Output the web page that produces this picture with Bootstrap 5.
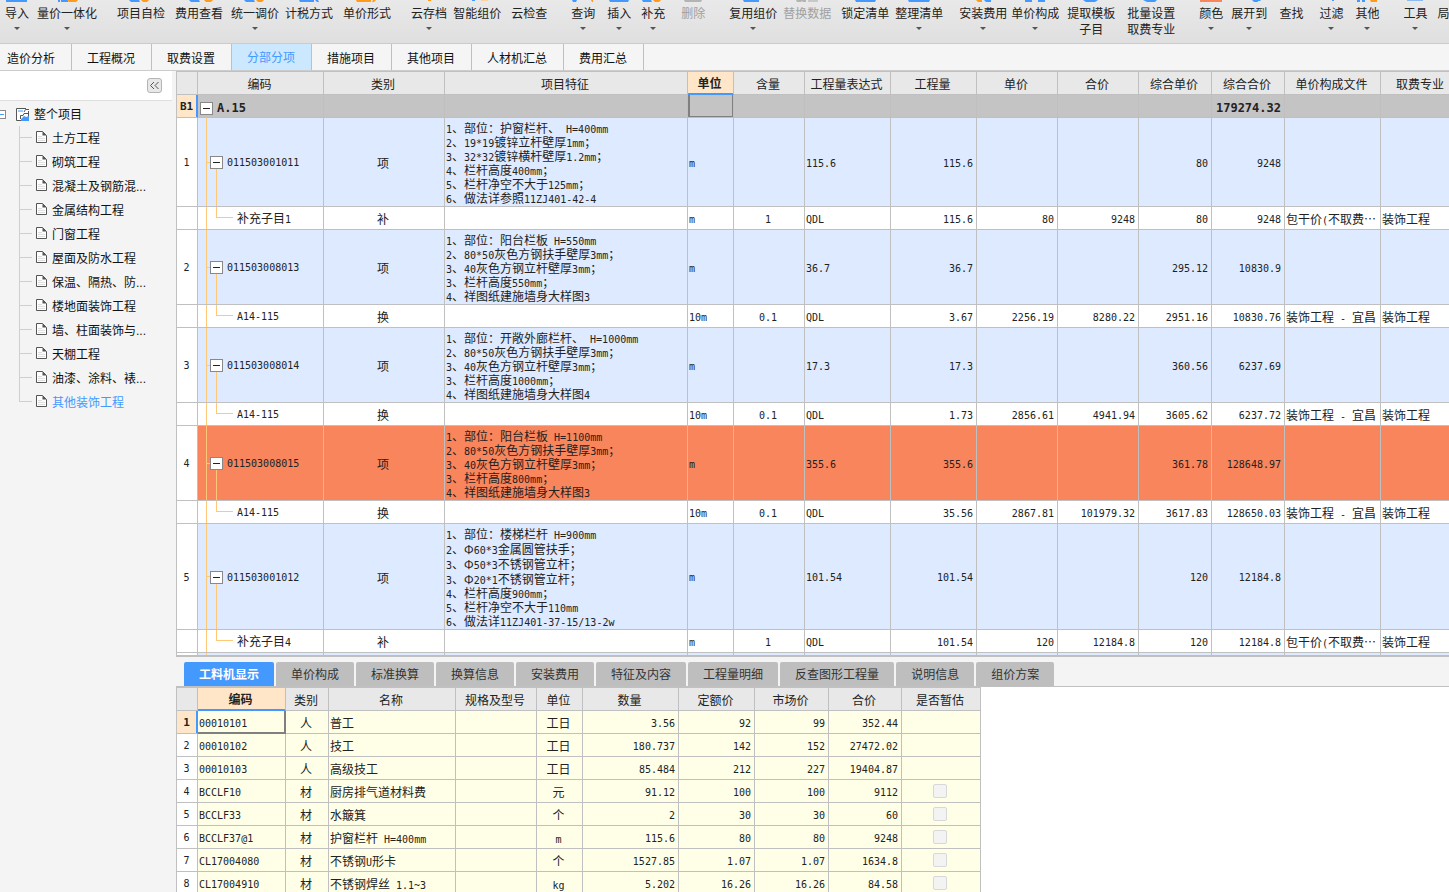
<!DOCTYPE html>
<html lang="zh-CN">
<head>
<meta charset="utf-8">
<meta name="viewport" content="width=device-width, initial-scale=1">
<title>分部分项</title>
<link href="https://cdn.jsdelivr.net/npm/bootstrap@5.3.0/dist/css/bootstrap.min.css" rel="stylesheet">
<script src="https://cdn.jsdelivr.net/npm/bootstrap@5.3.0/dist/js/bootstrap.bundle.min.js" defer></script>
<style>
:root { --line:#c0c0c0; --blue:#4499ff; --peach:#ffe6c8; --branch:#ffc878; --han:"Noto Sans CJK SC",sans-serif; --mono:"DejaVu Sans Mono","Noto Sans CJK SC",monospace; }
body { font:12px/16px "Liberation Sans","Noto Sans CJK SC",sans-serif; color:#111; background:#f4f4f4; }
button { font:inherit; color:inherit; border:0; background:none; padding:0; }
a { color:inherit; text-decoration:none; }

/* ribbon */
.ribbon { height:43px; padding-left:5px; background:linear-gradient(#e9e9e9,#dfdfdf); white-space:nowrap; color:#222; }
.ribbon button { flex:none; display:flex; flex-direction:column; align-items:center; }
.ribbon svg { width:24px; height:6px; margin:0 -6px; display:block; overflow:visible; }
.ribbon button.has-menu::after { content:""; margin-top:5px; border:3px solid transparent; border-top-color:#555; border-bottom:0; }
.ribbon button:disabled { color:#a0a0a0; }
.ms-6 { margin-left:6px; } .ms-10 { margin-left:10px; } .ms-12 { margin-left:12px; } .ms-20 { margin-left:20px; }
.b { fill:#4499ff; } .o { fill:#ff9a1a; } .g { fill:#b4b4b4; } .l { fill:#c8c8c8; } .r { fill:#f8855c; }

/* page tabs */
.pages { height:28px; border-top:1px solid #ccc; border-bottom:1px solid #ccc; background:#f5f5f5; }
.pages a { flex:none; padding:7px 16px 0 15px; border-right:1px solid var(--line); color:#111; }
.pages a:first-child { padding-left:7px; }
.pages a.active { background:#cce8ff; color:var(--blue); padding-top:6px; }

/* project tree */
.side { width:172px; flex:none; margin-right:4px; }
.side-head { height:30px; background:#fff; border-bottom:1px solid #e0e0e0; padding:0 10px; }
.fold { width:15px; height:15px; border:1px solid #b4b4b4; border-radius:3px; background:#e8e8e8; }
.tree-root { height:24px; gap:4px; margin-top:1px; padding-top:2px; }
.tree-root svg { margin-bottom:2px; }
.tree-root .stub { width:6px; height:9px; border:1px solid #8a8a8a; border-left:0; margin:0 6px 2px 0; background:linear-gradient(var(--blue),var(--blue)) 0 3px/4px 1px no-repeat #fff; }
.tree li { height:24px; padding-left:19px; background:linear-gradient(var(--branch),var(--branch)) 19px 0/1px 24px no-repeat, linear-gradient(var(--branch),var(--branch)) 19px 11px/13px 1px no-repeat; }
.tree li:last-child { background-size:1px 12px,13px 1px; }
.tree li a { gap:5px; padding:2px 0 0 17px; height:24px; color:#111; }
.tree li svg { margin-bottom:4px; }
.tree li a.active { color:var(--blue); }

/* grids */
.sheet { border-left:1px solid var(--line); }
.upper { border-top:1px solid var(--line); border-bottom:2px solid var(--line); background:#fff; }
.cells { table-layout:fixed; border-collapse:separate; border-spacing:0; font-family:var(--mono); font-size:10px; line-height:14px; color:#222; }
.cells th, .cells td { border-right:1px solid var(--line); border-bottom:1px solid var(--line); padding:3px 3px 0 1px; height:23px; white-space:nowrap; overflow:hidden; }
.cells thead th { background:#e8e8e8; font:12px/14px var(--han); text-align:center; padding-top:1px; }
.cells tbody th { background:#fff; font-weight:400; text-align:center; padding:2px 1px 0 0; }
.cells thead th.on { background:var(--peach); font-weight:700; border-bottom-color:var(--blue); box-shadow:inset 0 -1px var(--blue); padding-top:0; }
.cells tbody th.on { background:var(--peach); font-weight:700; border-right-color:var(--blue); box-shadow:inset -1px 0 var(--blue); font-size:11px; }
.han { font:12px/14px var(--han); }
.lt { font:10px/1 var(--mono); }

.bill { width:1285px; }
.bill td:nth-child(3), .bill td:nth-child(4), .bill td:nth-child(13), .bill td:nth-child(14) { font:12px/14px var(--han); padding-top:2px; }
.bill td:nth-child(3), .bill td:nth-child(6) { text-align:center; }
.bill td:nth-child(n+8):nth-child(-n+12) { text-align:right; }
.bill .item td { background-color:#deeaff; }
.bill .flag td { background-color:#f8855c; }
.bill .h89 td { height:89px; } .bill .h75 td { height:75px; } .bill .h106 td { height:106px; }
.bill .phi { line-height:15px; display:inline-block; }
.bill .total td { background:#c4c4c4; font-weight:700; font-size:12px; }
.bill .total td.pick { box-shadow:inset 2px 0 #808080, inset -1px 0 #808080, inset 0 -1px #808080; }
.bill .item td.code { padding:2px 0 0 12px; background-image:linear-gradient(var(--branch),var(--branch)),linear-gradient(var(--branch),var(--branch)),linear-gradient(var(--branch),var(--branch)); background-repeat:no-repeat; background-position:8px 0,8px 50%,18px 100%; background-size:1px 100%,5px 1px,1px 50%; }
.bill .sub td.code { padding-top:2px; padding-left:39px; background-image:linear-gradient(var(--branch),var(--branch)),linear-gradient(var(--branch),var(--branch)),linear-gradient(var(--branch),var(--branch)); background-repeat:no-repeat; background-position:8px 0,18px 0,18px 10px; background-size:1px 100%,1px 10px,17px 1px; }
.toggle { width:13px; height:13px; border:1px solid #888; background:linear-gradient(#222,#222) center/7px 1px no-repeat #fff; margin-right:4px; vertical-align:-2px; }
.total .toggle { margin-left:1px; }

.detail { height:235px; flex:none; }
.kinds { padding:5px 0 0 8px; gap:2px; height:30px; border-bottom:1px solid var(--line); flex:none; }
.kinds button { flex:none; height:24px; padding:1px 15px 0; background:#bebebe; border-radius:2px 2px 0 0; color:#333; }
.kinds button.active { background:var(--blue); color:#fff; font-weight:700; }
.resources { border-top:1px solid var(--line); }
.res { width:804px; }
.res td { background:#ffffe8; }
.res td:nth-child(3), .res td:nth-child(4), .res td:nth-child(6) { font:12px/14px var(--han); padding-top:1px; }
.res td:nth-child(3), .res td:nth-child(6), .res td:nth-child(11) { text-align:center; }
.res td:nth-child(n+7):nth-child(-n+10) { text-align:right; }
.res td:nth-child(11) { padding-top:0; }
.res td.pick { box-shadow:inset -1px -1px #808080; border-right-color:#808080; border-bottom-color:#808080; }
.res input { appearance:none; display:block; width:14px; height:14px; margin:0 auto; border:1px solid #d8d8d8; border-radius:2px; background:#f3f3f3; }
</style>
</head>
<body class="vh-100 overflow-hidden d-flex flex-column">

<header class="ribbon d-flex align-items-start overflow-hidden flex-shrink-0">
  <button class="has-menu"><svg viewBox="-12 0 24 6"><rect class="b" x="-11" width="21" height="2"/></svg>导入</button>
  <button class="has-menu ms-2"><svg viewBox="-12 0 24 6"><path class="b" d="M-9 0h2v2h-2zM-6 0h7v2h-7z"/><path class="o" d="M0 0h11l-2 2H2z"/></svg>量价一体化</button>
  <button class="ms-20"><svg viewBox="-12 0 24 6"><path class="b" d="M-12 0h10l1 2h-9z"/><path class="o" d="M0 0h8l-2 2H2z"/></svg>项目自检</button>
  <button class="ms-10"><svg viewBox="-12 0 24 6"><path class="b" d="M-10 0H0l1 2h-9z"/><path class="o" d="M5 0h9l-2 2H7z"/></svg>费用查看</button>
  <button class="has-menu ms-2"><svg viewBox="-12 0 24 6"><path class="b" d="M-11 0h10l1 2h-9z"/><path class="o" d="M1 0h8L7 2H3z"/></svg>统一调价</button>
  <button class="ms-6"><svg viewBox="-12 0 24 6"><path class="b" d="M-10 0H5v2H-9zM6 0h3l1 2H8z"/></svg>计税方式</button>
  <button class="ms-10"><svg viewBox="-12 0 24 6"><path class="o" d="M-11 0H4v2h-14zM6 0h3L7 2H5z"/></svg>单价形式</button>
  <button class="has-menu ms-20"><svg viewBox="-12 0 24 6"><rect class="o" x="-1" width="3" height="1"/></svg>云存档</button>
  <button class="ms-6"><svg viewBox="-12 0 24 6"><rect class="b" x="-5" width="3" height="1"/><rect x="4" width="7" height="1" fill="#ffd0a0"/></svg>智能组价</button>
  <button class="ms-10"><svg viewBox="-12 0 24 6"></svg>云检查</button>
  <button class="has-menu ms-4"><svg viewBox="-12 0 24 6"><path class="b" d="M-11 0h5l-1 2h-3z"/><path class="o" d="M8 0h2v2H9z"/></svg>查询</button>
  <button class="has-menu ms-12"><svg viewBox="-12 0 24 6"><path class="b" d="M-10 0h20L9 2H-9z"/></svg>插入</button>
  <button class="has-menu ms-10"><svg viewBox="-12 0 24 6"><path class="b" d="M-11 0h9l1 2h-9z"/><path class="o" d="M0 0h8L6 2H2z"/></svg>补充</button>
  <button class="ms-3" disabled><svg viewBox="-12 0 24 6"><path class="g" d="M-9 0H9L8 2H-8z"/></svg>删除</button>
  <button class="has-menu ms-4"><svg viewBox="-12 0 24 6"><path class="b" d="M-10 0H6v2H-9z"/></svg>复用组价</button>
  <button class="ms-6" disabled><svg viewBox="-12 0 24 6"><path class="g" d="M-11 0h10v2h-3l-1-1-1 1h-4z"/><path class="l" d="M1 0h10v2H1z"/></svg>替换数据</button>
  <button class="ms-10"><svg viewBox="-12 0 24 6"><path class="b" d="M-10 0h21l-1 2H-9z"/></svg>锁定清单</button>
  <button class="has-menu ms-6"><svg viewBox="-12 0 24 6"><path class="b" d="M-11 0h22l-1 2h-20z"/></svg>整理清单</button>
  <button class="has-menu ms-3"><svg viewBox="-12 0 24 6"><path class="o" d="M-7 0h6v2h-4z"/><path class="b" d="M1 0h7v2H3z"/></svg>安装费用</button>
  <button class="has-menu ms-1"><svg viewBox="-12 0 24 6"><path class="b" d="M-10 0h7v2h-7zM3 0h7v2H3z"/></svg>单价构成</button>
  <button class="ms-2"><svg viewBox="-12 0 24 6"><path class="b" d="M-8 0H7L4 2h-9z"/></svg>提取模板<br>子目</button>
  <button class="ms-12"><svg viewBox="-12 0 24 6"><path class="b" d="M-8 0H6L4 2h-8z"/></svg>批量设置<br>取费专业</button>
  <button class="has-menu ms-4"><svg viewBox="-12 0 24 6"><rect class="r" x="-11" width="22" height="2"/></svg>颜色</button>
  <button class="has-menu ms-2"><svg viewBox="-12 0 24 6"><path class="b" d="M3 0h9l-1 1H9v1H5z"/></svg>展开到</button>
  <button class="ms-12"><svg viewBox="-12 0 24 6"></svg>查找</button>
  <button class="has-menu ms-3"><svg viewBox="-12 0 24 6"><rect class="b" x="1" width="2" height="1"/></svg>过滤</button>
  <button class="has-menu ms-12"><svg viewBox="-12 0 24 6"><path class="b" d="M-10 0h3v2h-3zM-5 0h3v2h-3z"/><path class="o" d="M3 0h7v2H4z"/></svg>其他</button>
  <button class="has-menu ms-4"><svg viewBox="-12 0 24 6"><rect x="-8" width="16" height="1" fill="#8cb9f0"/></svg>工具</button>
  <button class="ms-10"><svg viewBox="-12 0 24 6"></svg>局</button>
</header>

<nav class="pages d-flex flex-shrink-0 overflow-hidden">
  <a href="#">造价分析</a><a href="#">工程概况</a><a href="#">取费设置</a><a href="#" class="active">分部分项</a><a href="#">措施项目</a><a href="#">其他项目</a><a href="#">人材机汇总</a><a href="#">费用汇总</a>
</nav>

<div class="d-flex flex-grow-1 overflow-hidden">
  <aside class="side">
    <div class="side-head d-flex align-items-center justify-content-end">
      <button class="fold d-flex align-items-center justify-content-center" aria-label="收起"><svg width="11" height="9" viewBox="0 0 11 9" fill="none" stroke="#555"><path d="M5 1L1.500 4.500 5 8M9.500 1L6 4.500 9.500 8"/></svg></button>
    </div>
    <div class="tree-root d-flex align-items-center">
      <span class="stub"></span>
      <svg width="14" height="13" viewBox="0 0 14 13"><path d="M.5.500h12v12H.5z" fill="#fff"/><path d="M10 .5H.5v12H5M12.500 3v9.500" stroke="#555" fill="none"/><path d="M2 2h5v2H2z" fill="#9cccff"/><path d="M13 1.500H9.500L8 4M4.500 11V7.500H7l1-2h4" fill="none" stroke="#555"/><path d="M5 12v-1l3-3 2 1 3-1v5H5z" fill="#4499ff"/></svg>
      <a href="#" class="text-nowrap">整个项目</a>
    </div>
    <svg width="0" height="0" class="position-absolute"><symbol id="doc" viewBox="0 0 11 12"><path d="M.5.5h6l4 4v7H.5z" fill="#fff" stroke="#555"/><path d="M6.500.5v4h4z" fill="#555"/><path d="M2 5.500h4M2 7.500h7M2 9.500h7" stroke="#ddd"/></symbol></svg>
    <ul class="tree list-unstyled m-0 text-nowrap">
      <li><a href="#" class="d-flex align-items-center"><svg width="11" height="12"><use href="#doc"/></svg>土方工程</a></li>
      <li><a href="#" class="d-flex align-items-center"><svg width="11" height="12"><use href="#doc"/></svg>砌筑工程</a></li>
      <li><a href="#" class="d-flex align-items-center"><svg width="11" height="12"><use href="#doc"/></svg>混凝土及钢筋混...</a></li>
      <li><a href="#" class="d-flex align-items-center"><svg width="11" height="12"><use href="#doc"/></svg>金属结构工程</a></li>
      <li><a href="#" class="d-flex align-items-center"><svg width="11" height="12"><use href="#doc"/></svg>门窗工程</a></li>
      <li><a href="#" class="d-flex align-items-center"><svg width="11" height="12"><use href="#doc"/></svg>屋面及防水工程</a></li>
      <li><a href="#" class="d-flex align-items-center"><svg width="11" height="12"><use href="#doc"/></svg>保温、隔热、防...</a></li>
      <li><a href="#" class="d-flex align-items-center"><svg width="11" height="12"><use href="#doc"/></svg>楼地面装饰工程</a></li>
      <li><a href="#" class="d-flex align-items-center"><svg width="11" height="12"><use href="#doc"/></svg>墙、柱面装饰与...</a></li>
      <li><a href="#" class="d-flex align-items-center"><svg width="11" height="12"><use href="#doc"/></svg>天棚工程</a></li>
      <li><a href="#" class="d-flex align-items-center"><svg width="11" height="12"><use href="#doc"/></svg>油漆、涂料、裱...</a></li>
      <li><a href="#" class="d-flex align-items-center active"><svg width="11" height="12"><use href="#doc"/></svg>其他装饰工程</a></li>
    </ul>
  </aside>

  <main class="d-flex flex-column flex-grow-1 overflow-hidden">
    <section class="sheet upper flex-grow-1 overflow-hidden">
      <table class="cells bill">
        <colgroup><col width="21"><col width="126"><col width="121"><col width="243"><col width="46"><col width="71"><col width="86"><col width="86"><col width="81"><col width="81"><col width="73"><col width="73"><col width="96"><col width="81"></colgroup>
        <thead><tr><th></th><th>编码</th><th>类别</th><th>项目特征</th><th class="on">单位</th><th>含量</th><th>工程量表达式</th><th>工程量</th><th>单价</th><th>合价</th><th>综合单价</th><th>综合合价</th><th>单价构成文件</th><th>取费专业</th></tr></thead>
        <tbody>
          <tr class="total"><th class="on">B1</th><td><button class="toggle" aria-label="折叠"></button>A.15</td><td></td><td></td><td class="pick"></td><td></td><td></td><td></td><td></td><td></td><td></td><td>179274.32</td><td></td><td></td></tr>
          <tr class="item h89"><th>1</th><td class="code"><button class="toggle" aria-label="折叠"></button>011503001011</td><td>项</td><td><span class="lt">1</span>、部位：护窗栏杆、<span class="lt"> H=400mm</span><br><span class="lt">2</span>、<span class="lt">19*19</span>镀锌立杆壁厚<span class="lt">1mm</span>；<br><span class="lt">3</span>、<span class="lt">32*32</span>镀锌横杆壁厚<span class="lt">1.2mm</span>；<br><span class="lt">4</span>、栏杆高度<span class="lt">400mm</span>；<br><span class="lt">5</span>、栏杆净空不大于<span class="lt">125mm</span>；<br><span class="lt">6</span>、做法详参照<span class="lt">11ZJ401-42-4</span></td><td>m</td><td></td><td>115.6</td><td>115.6</td><td></td><td></td><td>80</td><td>9248</td><td></td><td></td></tr>
          <tr class="sub"><th></th><td class="code"><span class="han">补充子目</span>1</td><td>补</td><td></td><td>m</td><td>1</td><td>QDL</td><td>115.6</td><td>80</td><td>9248</td><td>80</td><td>9248</td><td>包干价<span class="lt">(</span>不取费…</td><td>装饰工程</td></tr>
          <tr class="item h75"><th>2</th><td class="code"><button class="toggle" aria-label="折叠"></button>011503008013</td><td>项</td><td><span class="lt">1</span>、部位：阳台栏板<span class="lt"> H=550mm</span><br><span class="lt">2</span>、<span class="lt">80*50</span>灰色方钢扶手壁厚<span class="lt">3mm</span>；<br><span class="lt">3</span>、<span class="lt">40</span>灰色方钢立杆壁厚<span class="lt">3mm</span>；<br><span class="lt">3</span>、栏杆高度<span class="lt">550mm</span>；<br><span class="lt">4</span>、祥图纸建施墙身大样图<span class="lt">3</span></td><td>m</td><td></td><td>36.7</td><td>36.7</td><td></td><td></td><td>295.12</td><td>10830.9</td><td></td><td></td></tr>
          <tr class="sub"><th></th><td class="code">A14-115</td><td>换</td><td></td><td>10m</td><td>0.1</td><td>QDL</td><td>3.67</td><td>2256.19</td><td>8280.22</td><td>2951.16</td><td>10830.76</td><td>装饰工程<span class="lt"> - </span>宜昌</td><td>装饰工程</td></tr>
          <tr class="item h75"><th>3</th><td class="code"><button class="toggle" aria-label="折叠"></button>011503008014</td><td>项</td><td><span class="lt">1</span>、部位：开敞外廊栏杆、<span class="lt"> H=1000mm</span><br><span class="lt">2</span>、<span class="lt">80*50</span>灰色方钢扶手壁厚<span class="lt">3mm</span>；<br><span class="lt">3</span>、<span class="lt">40</span>灰色方钢立杆壁厚<span class="lt">3mm</span>；<br><span class="lt">3</span>、栏杆高度<span class="lt">1000mm</span>；<br><span class="lt">4</span>、祥图纸建施墙身大样图<span class="lt">4</span></td><td>m</td><td></td><td>17.3</td><td>17.3</td><td></td><td></td><td>360.56</td><td>6237.69</td><td></td><td></td></tr>
          <tr class="sub"><th></th><td class="code">A14-115</td><td>换</td><td></td><td>10m</td><td>0.1</td><td>QDL</td><td>1.73</td><td>2856.61</td><td>4941.94</td><td>3605.62</td><td>6237.72</td><td>装饰工程<span class="lt"> - </span>宜昌</td><td>装饰工程</td></tr>
          <tr class="item flag h75"><th>4</th><td class="code"><button class="toggle" aria-label="折叠"></button>011503008015</td><td>项</td><td><span class="lt">1</span>、部位：阳台栏板<span class="lt"> H=1100mm</span><br><span class="lt">2</span>、<span class="lt">80*50</span>灰色方钢扶手壁厚<span class="lt">3mm</span>；<br><span class="lt">3</span>、<span class="lt">40</span>灰色方钢立杆壁厚<span class="lt">3mm</span>；<br><span class="lt">3</span>、栏杆高度<span class="lt">800mm</span>；<br><span class="lt">4</span>、祥图纸建施墙身大样图<span class="lt">3</span></td><td>m</td><td></td><td>355.6</td><td>355.6</td><td></td><td></td><td>361.78</td><td>128648.97</td><td></td><td></td></tr>
          <tr class="sub"><th></th><td class="code">A14-115</td><td>换</td><td></td><td>10m</td><td>0.1</td><td>QDL</td><td>35.56</td><td>2867.81</td><td>101979.32</td><td>3617.83</td><td>128650.03</td><td>装饰工程<span class="lt"> - </span>宜昌</td><td>装饰工程</td></tr>
          <tr class="item h106"><th>5</th><td class="code"><button class="toggle" aria-label="折叠"></button>011503001012</td><td>项</td><td><span class="lt">1</span>、部位：楼梯栏杆<span class="lt"> H=900mm</span><br><span class="lt">2</span>、<span class="phi">Φ</span><span class="lt">60*3</span>金属圆管扶手；<br><span class="lt">3</span>、<span class="phi">Φ</span><span class="lt">50*3</span>不锈钢管立杆；<br><span class="lt">3</span>、<span class="phi">Φ</span><span class="lt">20*1</span>不锈钢管立杆；<br><span class="lt">4</span>、栏杆高度<span class="lt">900mm</span>；<br><span class="lt">5</span>、栏杆净空不大于<span class="lt">110mm</span><br><span class="lt">6</span>、做法详<span class="lt">11ZJ401-37-15/13-2w</span></td><td>m</td><td></td><td>101.54</td><td>101.54</td><td></td><td></td><td>120</td><td>12184.8</td><td></td><td></td></tr>
          <tr class="sub"><th></th><td class="code"><span class="han">补充子目</span>4</td><td>补</td><td></td><td>m</td><td>1</td><td>QDL</td><td>101.54</td><td>120</td><td>12184.8</td><td>120</td><td>12184.8</td><td>包干价<span class="lt">(</span>不取费…</td><td>装饰工程</td></tr>
          <tr class="item h75"><th></th><td class="code"></td><td></td><td></td><td></td><td></td><td></td><td></td><td></td><td></td><td></td><td></td><td></td><td></td></tr>
        </tbody>
      </table>
    </section>

    <section class="detail d-flex flex-column overflow-hidden">
      <div class="kinds d-flex">
        <button class="active">工料机显示</button><button>单价构成</button><button>标准换算</button><button>换算信息</button><button>安装费用</button><button>特征及内容</button><button>工程量明细</button><button>反查图形工程量</button><button>说明信息</button><button>组价方案</button>
      </div>
      <div class="bg-white flex-grow-1 overflow-hidden d-flex align-items-start">
        <div class="sheet resources">
        <table class="cells res">
          <colgroup><col width="21"><col width="88"><col width="43"><col width="127"><col width="81"><col width="46"><col width="96"><col width="76"><col width="74"><col width="73"><col width="79"></colgroup>
          <thead><tr><th></th><th class="on">编码</th><th>类别</th><th>名称</th><th>规格及型号</th><th>单位</th><th>数量</th><th>定额价</th><th>市场价</th><th>合价</th><th>是否暂估</th></tr></thead>
          <tbody>
            <tr><th class="on">1</th><td class="pick">00010101</td><td>人</td><td>普工</td><td></td><td>工日</td><td>3.56</td><td>92</td><td>99</td><td>352.44</td><td></td></tr>
            <tr><th>2</th><td>00010102</td><td>人</td><td>技工</td><td></td><td>工日</td><td>180.737</td><td>142</td><td>152</td><td>27472.02</td><td></td></tr>
            <tr><th>3</th><td>00010103</td><td>人</td><td>高级技工</td><td></td><td>工日</td><td>85.484</td><td>212</td><td>227</td><td>19404.87</td><td></td></tr>
            <tr><th>4</th><td>BCCLF10</td><td>材</td><td>厨房排气道材料费</td><td></td><td>元</td><td>91.12</td><td>100</td><td>100</td><td>9112</td><td><input type="checkbox" disabled aria-label="是否暂估"></td></tr>
            <tr><th>5</th><td>BCCLF33</td><td>材</td><td>水簸箕</td><td></td><td>个</td><td>2</td><td>30</td><td>30</td><td>60</td><td><input type="checkbox" disabled aria-label="是否暂估"></td></tr>
            <tr><th>6</th><td>BCCLF37@1</td><td>材</td><td>护窗栏杆<span class="lt"> H=400mm</span></td><td></td><td><span class="lt">m</span></td><td>115.6</td><td>80</td><td>80</td><td>9248</td><td><input type="checkbox" disabled aria-label="是否暂估"></td></tr>
            <tr><th>7</th><td>CL17004080</td><td>材</td><td>不锈钢<span class="lt">U</span>形卡</td><td></td><td>个</td><td>1527.85</td><td>1.07</td><td>1.07</td><td>1634.8</td><td><input type="checkbox" disabled aria-label="是否暂估"></td></tr>
            <tr><th>8</th><td>CL17004910</td><td>材</td><td>不锈钢焊丝<span class="lt"> 1.1~3</span></td><td></td><td><span class="lt">kg</span></td><td>5.202</td><td>16.26</td><td>16.26</td><td>84.58</td><td><input type="checkbox" disabled aria-label="是否暂估"></td></tr>
          </tbody>
        </table>
        </div>
      </div>
    </section>
  </main>
</div>
</body>
</html>
